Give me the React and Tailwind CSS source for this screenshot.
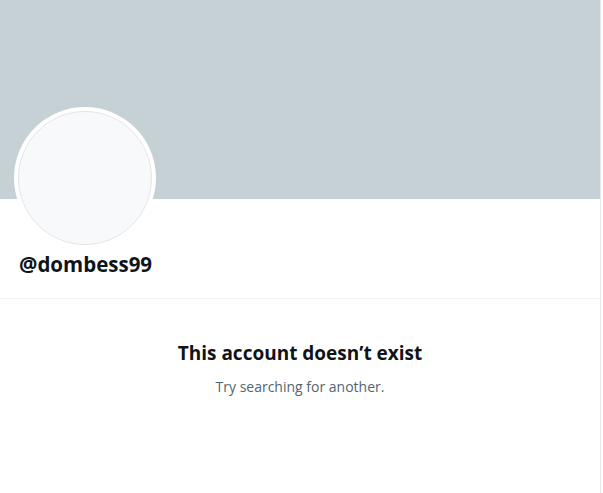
export default function App() {
  return (
    <div className="w-[603px] h-[493px] bg-white overflow-hidden" style={{ fontFamily: '"Segoe UI", "Open Sans", "Liberation Sans", sans-serif' }}>
      <div className="w-[601px] h-full border-r border-[#e6e9ea] flex flex-col">
        <div className="h-[199px] bg-[#c6d1d6] shrink-0" />
        <div className="relative h-[100px] border-b border-[#eff3f4] shrink-0 px-[19px] pt-[53px]">
          <div className="absolute left-[14px] top-[-92px] w-[142px] h-[142px] rounded-full bg-white p-[4px]">
            <div className="w-full h-full rounded-full bg-[#f7f9fa] border border-[#e3e6e8]" />
          </div>
          <div className="text-[20.5px] font-bold text-[#0f1419] leading-[24px]">@dombess99</div>
        </div>
        <div className="flex flex-col items-center pt-[41px]">
          <h1 className="text-[19px] font-bold text-[#0f1419] leading-[26px]">This account doesn’t exist</h1>
          <p className="mt-[11px] text-[14px] text-[#536471] leading-[20px]">Try searching for another.</p>
        </div>
      </div>
    </div>
  );
}
